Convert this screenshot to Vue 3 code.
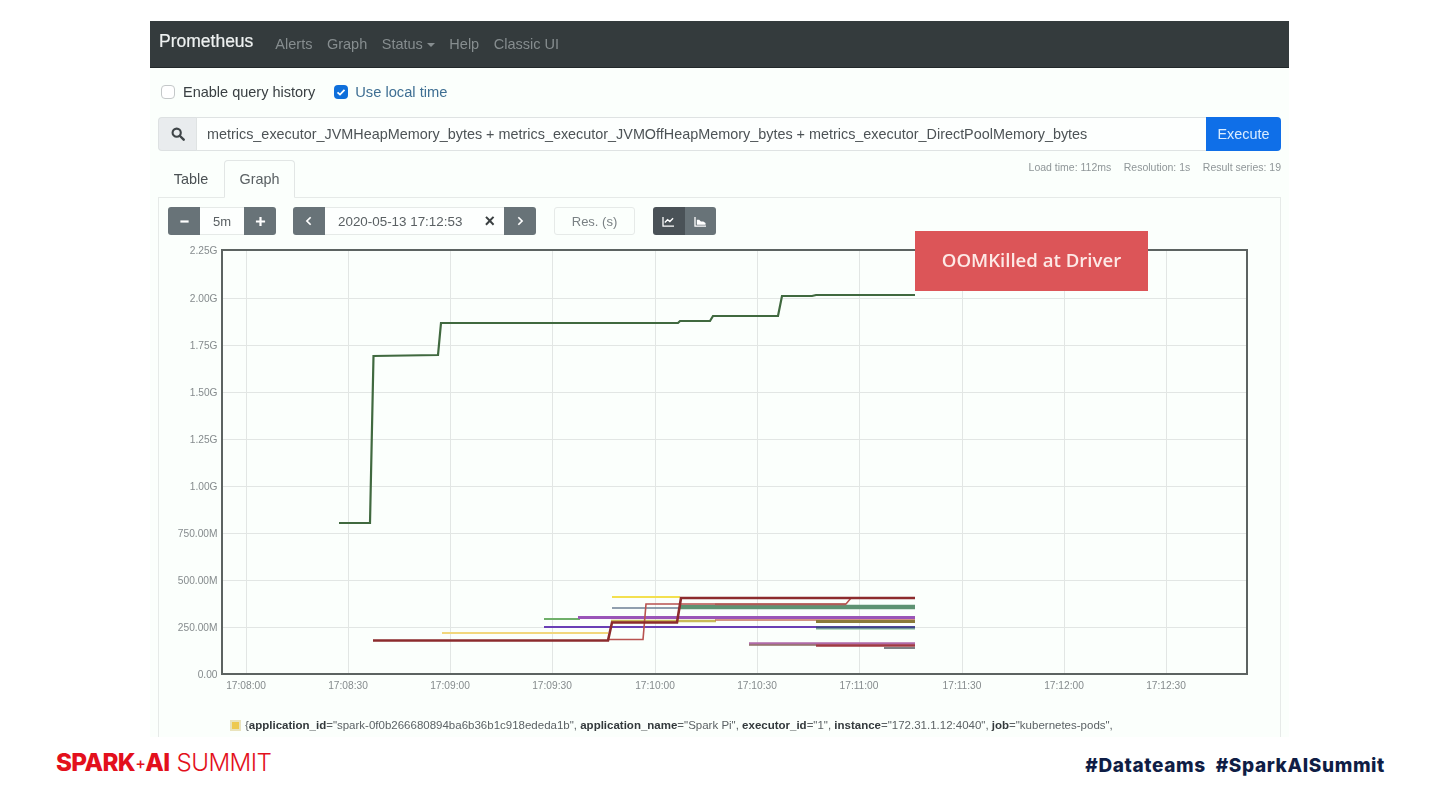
<script setup>
const yTicks = [
  ['2.25G', 250], ['2.00G', 298], ['1.75G', 345], ['1.50G', 392], ['1.25G', 439],
  ['1.00G', 486], ['750.00M', 533], ['500.00M', 580], ['250.00M', 627], ['0.00', 674]
]
const xTicks = [
  ['17:08:00', 246], ['17:08:30', 348], ['17:09:00', 450], ['17:09:30', 552], ['17:10:00', 655],
  ['17:10:30', 757], ['17:11:00', 859], ['17:11:30', 962], ['17:12:00', 1064], ['17:12:30', 1166]
]
const series = [
  { d: 'M442 633H608', c: '#f2d77c', w: 2 },
  { d: 'M612 597H680', c: '#f3e04f', w: 2 },
  { d: 'M612 608H680', c: '#6d7f95', w: 1.6 },
  { d: 'M544 619H580', c: '#6fb06a', w: 2 },
  { d: 'M611 621H716', c: '#c9bb58', w: 2.4 },
  { d: 'M680 607H915', c: '#5d9272', w: 4.6 },
  { d: 'M715 604.5H846', c: '#94776a', w: 2 },
  { d: 'M578 617.5H915', c: '#9a55b8', w: 3 },
  { d: 'M715 620H915', c: '#c4705c', w: 1.6 },
  { d: 'M816 621.5H915', c: '#8a7a3a', w: 3 },
  { d: 'M816 629H915', c: '#9ed0ac', w: 1.6 },
  { d: 'M544 627H915', c: '#6a3fb5', w: 2 },
  { d: 'M816 627.5H915', c: '#384a80', w: 2 },
  { d: 'M884 648H915', c: '#7f8084', w: 2 },
  { d: 'M749 643.5H915', c: '#b06aa8', w: 2.4 },
  { d: 'M749 645H816', c: '#8c6a60', w: 1.6 },
  { d: 'M816 645.5H915', c: '#a03a42', w: 2.6 },
  { d: 'M608 639.5H643L646 604H846L851 598H915', c: '#b8524f', w: 1.6 },
  { d: 'M373 640.5H608L612 622.5H677L681 598H915', c: '#8c2b2d', w: 2.6 },
  { d: 'M339 523H370L373.500 356L438 355L441 323H678L680 321H710L713 316H778L782 296H812L816 295H915', c: '#40693f', w: 2.2 }
]
</script>

<template>
  <div class="slide">
    <div class="shot">
      <nav class="nav">
        <span class="brand">Prometheus</span>
        <a>Alerts</a>
        <a>Graph</a>
        <a>Status<i class="caret"></i></a>
        <a>Help</a>
        <a>Classic UI</a>
      </nav>

      <div class="options">
        <label class="check"><span class="box"></span>Enable query history</label>
        <label class="check on">
          <span class="box">
            <svg viewBox="0 0 14 14" width="14" height="14"><path d="M3.500 7.300 6 9.600 10.500 4.800" fill="none" stroke="#fff" stroke-width="1.800" /></svg>
          </span>
          Use local time
        </label>
      </div>

      <div class="query">
        <span class="addon">
          <svg viewBox="0 0 16 16" width="14" height="14"><circle cx="6.500" cy="6.500" r="4.700" fill="none" stroke="#3f4548" stroke-width="2.400" /><path d="M10 10l4.500 4.500" stroke="#3f4548" stroke-width="2.800" stroke-linecap="round" /></svg>
        </span>
        <span class="expr">metrics_executor_JVMHeapMemory_bytes + metrics_executor_JVMOffHeapMemory_bytes + metrics_executor_DirectPoolMemory_bytes</span>
        <button class="exec">Execute</button>
      </div>

      <div class="tabrow">
        <div class="tabs">
          <span class="tab">Table</span>
          <span class="tab active">Graph</span>
        </div>
        <div class="stats">
          <span>Load time: 112ms</span>
          <span>Resolution: 1s</span>
          <span>Result series: 19</span>
        </div>
      </div>

      <section class="panel">
        <div class="controls">
          <div class="group">
            <button class="gbtn first">
              <svg viewBox="0 0 12 12" width="11" height="11"><path d="M1.500 6h9" stroke="#fff" stroke-width="2.400" /></svg>
            </button>
            <span class="field range">5m</span>
            <button class="gbtn last">
              <svg viewBox="0 0 12 12" width="11" height="11"><path d="M1 6h10M6 1v10" stroke="#fff" stroke-width="2.400" /></svg>
            </button>
          </div>
          <div class="group">
            <button class="gbtn first">
              <svg viewBox="0 0 12 12" width="10" height="10"><path d="M8 1.500 3.500 6 8 10.500" fill="none" stroke="#fff" stroke-width="2" /></svg>
            </button>
            <span class="field date">2020-05-13 17:12:53<b class="clear">×</b></span>
            <button class="gbtn last">
              <svg viewBox="0 0 12 12" width="10" height="10"><path d="M4 1.500 8.500 6 4 10.500" fill="none" stroke="#fff" stroke-width="2" /></svg>
            </button>
          </div>
          <span class="res">Res. (s)</span>
          <div class="group">
            <button class="gbtn first dark wide">
              <svg viewBox="0 0 14 12" width="13" height="11"><path d="M1 1v10h12" fill="none" stroke="#fff" stroke-width="1.400" /><path d="M3 7l3-3 2.500 2L12 2.500" fill="none" stroke="#fff" stroke-width="1.500" /></svg>
            </button>
            <button class="gbtn last wide">
              <svg viewBox="0 0 14 12" width="13" height="11"><path d="M1 1v10h12" fill="none" stroke="#fff" stroke-width="1.400" /><path d="M3 9.500V4h2.500L7.500 6 10 6l2.500 1.500v2z" fill="#fff" /></svg>
            </button>
          </div>
        </div>

        <svg class="chart" viewBox="158 240 1123 460" width="1123" height="460">
          <rect x="222" y="250" width="1025" height="424" fill="#fbfffc" />
          <g stroke="#e2e6e4" stroke-width="1">
            <line v-for="t in yTicks" :key="t[0]" x1="222" x2="1247" :y1="t[1] + 0.5" :y2="t[1] + 0.5" />
            <line v-for="t in xTicks" :key="t[0]" y1="250" y2="674" :x1="t[1] + 0.5" :x2="t[1] + 0.5" />
          </g>
          <rect x="222" y="250" width="1025" height="424" fill="none" stroke="#5c6361" stroke-width="2" />
          <g class="ylab">
            <text v-for="t in yTicks" :key="t[0]" x="217.500" :y="t[1] + 3.500" text-anchor="end">{{ t[0] }}</text>
          </g>
          <g class="xlab">
            <text v-for="t in xTicks" :key="t[0]" :x="t[1]" y="689" text-anchor="middle">{{ t[0] }}</text>
          </g>
          <path v-for="(s, i) in series" :key="i" :d="s.d" fill="none" :stroke="s.c" :stroke-width="s.w" />
        </svg>

        <div class="legend">
          <span class="swatch"><i></i></span>
          <span>{<b>application_id</b>="spark-0f0b266680894ba6b36b1c918ededa1b", <b>application_name</b>="Spark Pi", <b>executor_id</b>="1", <b>instance</b>="172.31.1.12:4040", <b>job</b>="kubernetes-pods",</span>
        </div>
      </section>
    </div>

    <div class="callout">OOMKilled at Driver</div>

    <footer class="foot">
      <div class="logo"><b>SPARK</b><em>+</em><b>AI</b><span>SUMMIT</span></div>
      <div class="tags"><span>#Datateams</span><span>#SparkAISummit</span></div>
    </footer>
  </div>
</template>

<style>
html, body { margin: 0; background: #fff; }
</style>

<style scoped>
.slide {
  position: relative;
  width: 1440px;
  height: 810px;
  background: #fff;
  overflow: hidden;
  font-family: "Liberation Sans", Arial, sans-serif;
}
.shot {
  margin: 21px 0 0 150px;
  width: 1139px;
  height: 716px;
  background: #fbfffc;
  overflow: hidden;
  filter: blur(0.6px);
}
.nav {
  height: 47px;
  background: #343b3d;
  display: flex;
  align-items: center;
  gap: 14.500px;
  padding: 0 0 0 9px;
  box-sizing: border-box;
  color: #868d8f;
  font-size: 14.500px;
  border-bottom: 1px solid #22282a;
}
.brand { color: #eef1f1; font-size: 17.500px; font-weight: 400; -webkit-text-stroke: 0.2px #eef1f1; margin-right: 7.500px; margin-bottom: 5px; }
.caret {
  display: inline-block;
  margin-left: 4px;
  vertical-align: 2px;
  border: 4px solid transparent;
  border-top-color: #868d8f;
  border-bottom: 0;
}
.options {
  height: 47px;
  margin-bottom: 2px;
  display: flex;
  align-items: center;
  gap: 19px;
  padding: 0 0 0 11px;
  font-size: 14.500px;
  color: #3a4043;
}
.check { display: flex; align-items: center; gap: 8px; }
.check.on { color: #3f6f93; font-size: 14.700px; gap: 7px; }
.box {
  width: 14px;
  height: 14px;
  box-sizing: border-box;
  border: 1.500px solid #c4c8c9;
  border-radius: 4px;
  background: #fff;
  display: block;
}
.on .box { background: #0f6fdb; border: 0; }
.on .box svg { display: block; }
.query {
  margin: 0 8px;
  height: 34px;
  display: flex;
  align-items: stretch;
  font-size: 14.400px;
  color: #4d5356;
}
.addon {
  width: 37px;
  background: #e9ecee;
  border: 1px solid #dde1e2;
  border-right: 0;
  border-radius: 4px 0 0 4px;
  display: flex;
  align-items: center;
  justify-content: center;
}
.expr {
  flex: 1;
  border: 1px solid #dfe3e3;
  border-right: 0;
  background: #fdfffe;
  padding-left: 10px;
  display: flex;
  align-items: center;
  white-space: nowrap;
}
.exec {
  width: 75px;
  border: 0;
  padding: 0;
  background: #0f6fe8;
  color: #d9ecff;
  font: inherit;
  border-radius: 0 4px 4px 0;
}
.tabrow {
  margin: 9px 8px 0;
  height: 37px;
  display: flex;
  justify-content: space-between;
}
.tabs { display: flex; }
.tab {
  width: 66px;
  box-sizing: border-box;
  display: flex;
  align-items: center;
  justify-content: center;
  font-size: 14.400px;
  color: #4b5154;
}
.tab.active {
  width: 71px;
  color: #5a6063;
  border: 1px solid #e2e6e5;
  border-bottom: 1px solid #fbfffc;
  border-radius: 4px 4px 0 0;
  height: 38px;
  position: relative;
  z-index: 1;
}
.stats {
  display: flex;
  gap: 12.500px;
  font-size: 10.500px;
  color: #8f9698;
  padding-top: 1px;
}
.panel {
  margin: 0 8px;
  height: 600px;
  border: 1px solid #e6eae8;
  box-sizing: border-box;
}
.controls {
  display: flex;
  align-items: stretch;
  height: 28px;
  margin: 9px 0 0 9px;
  gap: 17px;
}
.group { display: flex; }
button { cursor: default; }
.gbtn {
  width: 32px;
  border: 0;
  padding: 0;
  background: #687378;
  display: flex;
  align-items: center;
  justify-content: center;
}
.gbtn.first { border-radius: 3px 0 0 3px; }
.gbtn.last { border-radius: 0 3px 3px 0; }
.gbtn.dark { background: #4a5257; }
.gbtn.wide { width: 31.500px; }
.field {
  display: flex;
  align-items: center;
  justify-content: center;
  background: #fdfffe;
  border-top: 1px solid #e6eae8;
  border-bottom: 1px solid #e6eae8;
  font-size: 13.400px;
  color: #5a6063;
  box-sizing: border-box;
}
.range { width: 44px; font-size: 13px; }
.date { width: 179px; justify-content: flex-start; padding-left: 13px; }
.clear { margin-left: auto; margin-right: 9px; font-size: 18px; color: #3b4042; line-height: 1; }
.res {
  width: 81px;
  margin: 0 1px;
  display: flex;
  align-items: center;
  justify-content: center;
  box-sizing: border-box;
  border: 1px solid #e6eae8;
  border-radius: 3px;
  font-size: 13px;
  color: #7a8184;
}
.chart { display: block; margin-top: 5px; margin-left: -1px; overflow: visible; }
.ylab, .xlab { font-size: 10.200px; fill: #858b8d; }
.legend {
  display: flex;
  align-items: center;
  gap: 4px;
  margin: 19px 0 0 71px;
  font-size: 11.500px;
  white-space: nowrap;
  color: #5c6265;
}
.legend b { color: #33393c; }
.swatch {
  width: 11px;
  height: 11px;
  box-sizing: border-box;
  background: #e9e3bc;
  padding: 2px;
  display: block;
}
.swatch i { display: block; height: 100%; background: #edc94f; }
.callout {
  position: absolute;
  left: 915px;
  top: 231px;
  width: 233px;
  height: 60px;
  background: #dc5558;
  color: #fde9e6;
  font: 600 18.600px/58px "Open Sans", sans-serif;
  text-align: center;
  filter: blur(0.35px);
}
.foot {
  position: absolute;
  left: 56px;
  right: 55px;
  top: 745px;
  height: 36px;
  display: flex;
  justify-content: space-between;
  align-items: center;
}
.logo {
  color: #e3101c;
  font: 24.200px/30px Inter, sans-serif;
  display: flex;
  align-items: baseline;
  letter-spacing: -0.6px;
}
.logo b { font-weight: 800; }
.logo em { font-style: normal; font-size: 16px; font-weight: 500; margin: 0; align-self: center; }
.logo span { font-weight: 300; margin-left: 7px; }
.tags {
  display: flex;
  gap: 10px;
  color: #0f1d45;
  font: 800 19px/30px Inter, sans-serif;
  letter-spacing: 0.62px;
  padding-top: 6px;
}
</style>
